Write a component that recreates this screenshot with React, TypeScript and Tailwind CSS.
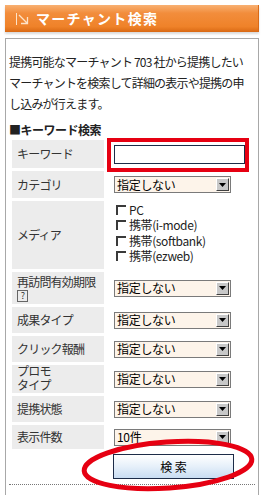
import React from "react";

const F = "font-['Noto_Sans_CJK_JP','Liberation_Sans',sans-serif]";

function Select({ value }: { value: string }) {
  return (
    <div className="flex h-[17px] w-[117px] items-center border border-[#7a7a7a] bg-[#fdf4ea]">
      <span className="flex-1 pl-[2px] text-[12px] leading-none tracking-[-0.3px] text-black">{value}</span>
      <span className="mr-[1px] flex h-[13px] w-[13px] items-center justify-center border border-t-white border-l-white border-b-[#404040] border-r-[#404040] bg-[#c8c8c8]">
        <svg width="7" height="4" viewBox="0 0 7 4">
          <path d="M0 0h7L3.5 4z" fill="#000" />
        </svg>
      </span>
    </div>
  );
}

function Check({ label }: { label: string }) {
  return (
    <div className="flex h-[15.5px] items-center">
      <span className="ml-[2px] mr-[3px] h-[10px] w-[10px] border-t-2 border-l-2 border-[#3a3a3a] bg-white" />
      <span className="text-[12px] leading-none tracking-[-0.4px] text-[#222]">{label}</span>
    </div>
  );
}

const rows: { label: React.ReactNode; h: string; value: React.ReactNode; top?: boolean }[] = [
  { label: "カテゴリ", h: "h-[27px]", value: <Select value="指定しない" /> },
  {
    label: "メディア",
    h: "h-[68px]",
    top: true,
    value: (
      <div className="pt-[1px]">
        <Check label="PC" />
        <Check label="携帯(i-mode)" />
        <Check label="携帯(softbank)" />
        <Check label="携帯(ezweb)" />
      </div>
    ),
  },
  {
    label: (
      <div className="flex flex-col">
        <span className="leading-[14px]">再訪問有効期限</span>
        <span className="mt-[1px] flex h-[12px] w-[11px] items-center justify-center border border-[#666] text-[9px] leading-none">?</span>
      </div>
    ),
    h: "h-[32px]",
    value: <Select value="指定しない" />,
  },
  { label: "成果タイプ", h: "h-[26px]", value: <Select value="指定しない" /> },
  { label: "クリック報酬", h: "h-[26px]", value: <Select value="指定しない" /> },
  {
    label: (
      <div className="flex flex-col font-['Liberation_Sans','Noto_Sans_CJK_JP',sans-serif]">
        <span className="leading-[14px]">プロモ</span>
        <span className="leading-[14px]">タイプ</span>
      </div>
    ),
    h: "h-[28px]",
    value: <Select value="指定しない" />,
  },
  { label: "提携状態", h: "h-[26px]", value: <Select value="指定しない" /> },
  { label: "表示件数", h: "h-[24px]", value: <Select value="10件" /> },
];

export default function App() {
  return (
    <div className={`relative h-[495px] w-[264px] overflow-hidden bg-white ${F}`}>
      {/* header bar */}
      <div className="mx-[5px] mt-[5px] flex h-[27px] items-center border-r border-r-[#d86a18] bg-[linear-gradient(to_bottom,#f8b072_0%,#f28d3c_30%,#ef8229_80%,#d96914_100%)] pl-[10px] shadow-[0_2px_2px_rgba(0,0,0,0.15)]">
        <svg width="15" height="14" viewBox="0 0 15 14" className="mr-[6px]">
          <path d="M1.5 1v12" stroke="#fde3c8" strokeWidth="1" />
          <path d="M4 3l8 8M6 11.5h6.5V5" stroke="#fde3c8" strokeWidth="1.3" fill="none" />
        </svg>
        <span className="text-[14px] font-bold tracking-[1.3px] text-white">マーチャント検索</span>
      </div>

      {/* content box */}
      <div className="mx-[5px] mt-[6px] h-[460px] border border-b-0 border-[#a8a8a8]">
        <div className="pl-[3px] pt-[12px] text-[12px] leading-[21px] tracking-[-0.8px] text-[#222]">
          <div className="whitespace-nowrap">提携可能なマーチャント 703 社から提携したい</div>
          <div className="whitespace-nowrap">マーチャントを検索して詳細の表示や提携の申</div>
          <div className="whitespace-nowrap">し込みが行えます。</div>
        </div>
        <div className="mt-[8px] pl-[3px] text-[12px] font-bold leading-[16px] tracking-[-0.5px] text-[#222]">■キーワード検索</div>

        <div className="ml-[6px] mt-[2px] flex flex-col gap-[3px]">
          <div className="relative grid h-[28px] grid-cols-[92px_1fr] gap-[3px]">
            <div className="flex items-center bg-[#ececec] pl-[5px] text-[12px] tracking-[-0.8px] text-[#333]">キーワード</div>
            <div className="flex items-center pl-[7px]">
              <div className="h-[19px] w-[131px] border border-[#1c2c48] bg-white" />
            </div>
            <div className="absolute left-[95px] top-[-2px] h-[34px] w-[142px] border-[4px] border-[#e60012]" />
          </div>
          {rows.map((r, i) => (
            <div key={i} className={`grid ${r.h} grid-cols-[92px_1fr] gap-[3px]`}>
              <div className="flex items-center bg-[#ececec] pl-[5px] text-[12px] tracking-[-0.8px] text-[#333]">{r.label}</div>
              <div className={`flex pl-[7px] ${r.top ? "items-start" : "items-center"}`}>{r.value}</div>
            </div>
          ))}
        </div>

        <div className="ml-[107px] mt-[5px] flex h-[25px] w-[121px] items-center justify-center border border-[#1c2c48] bg-[linear-gradient(to_bottom,#ffffff_0%,#e6f0fa_50%,#c9ddf2_100%)] text-[12px] text-black">
          検 索
        </div>
        <div className="mx-[3px] mt-[5px] border-t border-dotted border-[#777]" />
      </div>

      {/* annotation ellipse */}
      <svg className="absolute left-[78px] top-[434px]" width="182" height="62" viewBox="0 0 182 62">
        <ellipse cx="90" cy="31" rx="84" ry="23" fill="none" stroke="#e60012" strokeWidth="5" transform="rotate(-4 90 31)" />
      </svg>
    </div>
  );
}
